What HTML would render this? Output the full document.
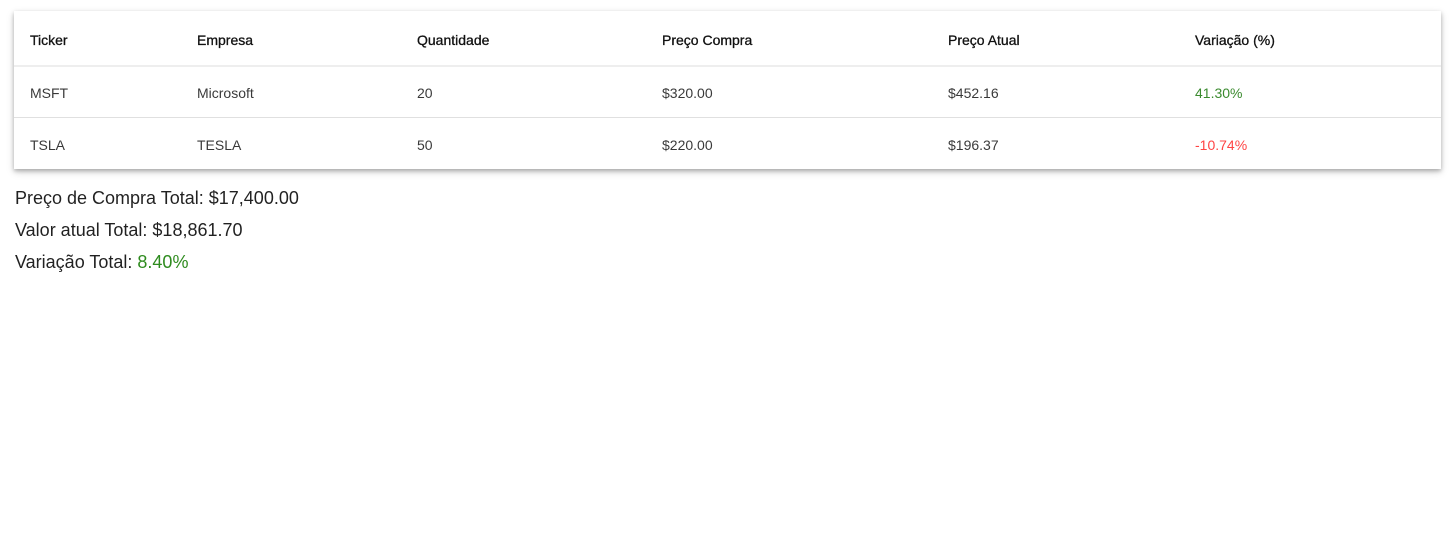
<!DOCTYPE html>
<html><head><style>
body{margin:0;width:1454px;height:533px;background:#fff;font-family:"Liberation Sans",sans-serif;position:relative;overflow:hidden}
.card{position:absolute;left:14px;top:11px;width:1427px;height:158px;background:#fff;box-shadow:0 2px 4px rgba(0,0,0,.25),0 3px 8px rgba(0,0,0,.15)}
.row{position:absolute;left:0;width:1427px}
.c{position:absolute;font-size:14px;color:rgba(0,0,0,.78);white-space:nowrap}
.h .c{color:#111;-webkit-text-stroke:0.3px #111}
.l{position:absolute;left:0;width:1427px;height:1px;background:#e0e0e0}
.s{position:absolute;left:15px;font-size:18px;color:rgba(0,0,0,.87);white-space:nowrap}
</style></head><body>
<div class="card">
<div class="row h" style="top:21px">
<span class="c" style="left:16px">Ticker</span><span class="c" style="left:183px">Empresa</span><span class="c" style="left:403px">Quantidade</span><span class="c" style="left:648px">Preço Compra</span><span class="c" style="left:934px">Preço Atual</span><span class="c" style="left:1181px">Variação (%)</span></div>
<div class="l" style="top:54px;height:2px;background:#eee"></div>
<div class="row" style="top:74px">
<span class="c" style="left:16px">MSFT</span><span class="c" style="left:183px">Microsoft</span><span class="c" style="left:403px">20</span><span class="c" style="left:648px">$320.00</span><span class="c" style="left:934px">$452.16</span><span class="c" style="left:1181px;color:#3a8a2e">41.30%</span></div>
<div class="l" style="top:106px"></div>
<div class="row" style="top:126px">
<span class="c" style="left:16px">TSLA</span><span class="c" style="left:183px">TESLA</span><span class="c" style="left:403px">50</span><span class="c" style="left:648px">$220.00</span><span class="c" style="left:934px">$196.37</span><span class="c" style="left:1181px;color:#f44">-10.74%</span></div>
</div>
<div class="s" style="top:188px">Preço de Compra Total: $17,400.00</div>
<div class="s" style="top:220px">Valor atual Total: $18,861.70</div>
<div class="s" style="top:252px">Variação Total: <span style="color:#2e8b1e">8.40%</span></div>
</body></html>
